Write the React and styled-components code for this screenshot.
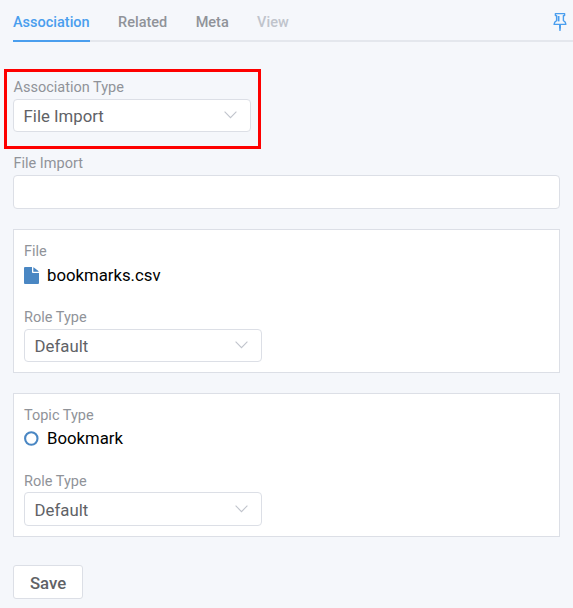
import React from "react";
import styled, { createGlobalStyle } from "styled-components";

const GlobalStyle = createGlobalStyle`
  * { box-sizing: border-box; }
  body {
    margin: 0;
    background: #f5f7fb;
    font-family: Roboto, "Liberation Sans", sans-serif;
  }
`;

const Page = styled.main`
  height: 608px;
  padding-left: 13px;
  overflow: hidden;
  background: #f5f7fb;
`;

const TabBar = styled.nav`
  display: flex;
  align-items: flex-start;
  gap: 28.4px;
  height: 42px;
  border-bottom: 2px solid #e4e7ed;
`;

const Tab = styled.span`
  height: 42px;
  padding-top: 13px;
  font-size: 14.5px;
  line-height: 20px;
  font-weight: 500;
  white-space: nowrap;
  color: ${(p) => (p.$active ? "#4a9eee" : p.$disabled ? "#c0c4cc" : "#909399")};
  border-bottom: 2px solid ${(p) => (p.$active ? "#4a9eee" : "transparent")};
`;

const PinButton = styled.span`
  display: flex;
  margin: 12px 6px 0 auto;
`;

const Highlight = styled.section`
  width: 257px;
  height: 80px;
  margin: 27px 0 0 -9px;
  padding: 5px 6px 0;
  border: 3px solid #fe0000;
`;

const Field = styled.div`
  display: flex;
  flex-direction: column;
  margin-top: ${(p) => p.$top || 0}px;
`;

const Label = styled.span`
  height: ${(p) => p.$height || 22}px;
  padding-left: ${(p) => p.$indent || 0}px;
  font-size: 14.5px;
  line-height: 22px;
  color: #909399;
`;

const SelectBox = styled.div`
  display: flex;
  align-items: center;
  justify-content: space-between;
  width: 238px;
  height: ${(p) => p.$height}px;
  padding: ${(p) => p.$height - 32}px 13px 0 9.6px;
  border: 1px solid #dcdfe6;
  border-radius: 4px;
  background: #fff;
  font-size: 16.75px;
  line-height: 20px;
  color: #606266;
`;

const TextInput = styled.input`
  width: 547px;
  height: 34px;
  border: 1px solid #dcdfe6;
  border-radius: 4px;
  background: #fff;
`;

const Panel = styled.section`
  width: 547px;
  height: 144px;
  margin-top: 20px;
  padding: 11px 10px 0;
  border: 1px solid #dcdfe6;
  background: #fff;
`;

const Entity = styled.div`
  display: flex;
  align-items: center;
  gap: 8px;
  height: ${(p) => p.$height}px;
  font-size: 16.75px;
  line-height: 24px;
  color: #000;
`;

const SaveButton = styled.button`
  display: block;
  width: 70px;
  height: 34px;
  margin-top: 28px;
  padding: 2px 0 0;
  border: 1px solid #dcdfe6;
  border-radius: 3px;
  background: #fff;
  font: 500 16.75px/20px Roboto, "Liberation Sans", sans-serif;
  color: #606266;
`;

const ChevronSvg = styled.svg`
  margin-top: -3px;
`;

const Chevron = () => (
  <ChevronSvg width="13" height="8" viewBox="0 0 13 8" fill="none">
    <path d="M.6.7 6.5 6.6 12.4.7" stroke="#c0c4cc" strokeWidth="1.1" />
  </ChevronSvg>
);

const PinIcon = () => (
  <svg width="14" height="20" viewBox="0 0 14 20" fill="none" stroke="#4a9eee" strokeLinejoin="round">
    <path d="M2.4 1.6h9.2v2h-1.2v5c1.5.7 2.4 2 2.5 3.8H1.1c.1-1.8 1-3.1 2.5-3.8v-5H2.4z" strokeWidth="1.4" />
    <path d="M5.6 4v5.4" strokeWidth="1.8" />
    <path d="M6 12.5h2v3L7.6 18.9H6.4L6 15.5z" fill="#4a9eee" stroke="none" />
  </svg>
);

const FileIcon = () => (
  <svg width="15" height="17" viewBox="0 0 15 17" fill="#4a87c3">
    <path d="M0 1Q0 0 1 0H8v5q0 1 1 1h6v10q0 1-1 1H1q-1 0-1-1z" />
    <path d="M9.3.2q.5.2.9.6l3.9 3q.5.5.6 1H9.3z" />
  </svg>
);

const TopicIcon = () => (
  <svg width="15" height="15" viewBox="0 0 15 15" fill="none">
    <circle cx="7.3" cy="7.5" r="6.2" stroke="#4a87c3" strokeWidth="2.1" />
  </svg>
);

function Select({ value, height = 33 }) {
  return (
    <SelectBox $height={height}>
      <span>{value}</span>
      <Chevron />
    </SelectBox>
  );
}

function RolePanel({ label, icon, name, nameHeight, top, labelHeight, selectHeight }) {
  return (
    <Panel>
      <Field>
        <Label>{label}</Label>
        <Entity $height={nameHeight}>
          {icon}
          <span>{name}</span>
        </Entity>
      </Field>
      <Field $top={top}>
        <Label $height={labelHeight}>Role Type</Label>
        <Select value="Default" height={selectHeight} />
      </Field>
    </Panel>
  );
}

export default function App() {
  return (
    <>
      <GlobalStyle />
      <Page>
        <TabBar>
          <Tab $active>Association</Tab>
          <Tab>Related</Tab>
          <Tab>Meta</Tab>
          <Tab $disabled>View</Tab>
          <PinButton>
            <PinIcon />
          </PinButton>
        </TabBar>
        <Highlight>
          <Field>
            <Label $indent={0.5}>Association Type</Label>
            <Select value="File Import" />
          </Field>
        </Highlight>
        <Field $top={4}>
          <Label $indent={0.5}>File Import</Label>
          <TextInput />
        </Field>
        <RolePanel label="File" icon={<FileIcon />} name="bookmarks.csv" nameHeight={24} top={20} />
        <RolePanel
          label="Topic Type"
          icon={<TopicIcon />}
          name="Bookmark"
          nameHeight={22}
          top={22}
          labelHeight={21}
          selectHeight={34}
        />
        <SaveButton>Save</SaveButton>
      </Page>
    </>
  );
}
